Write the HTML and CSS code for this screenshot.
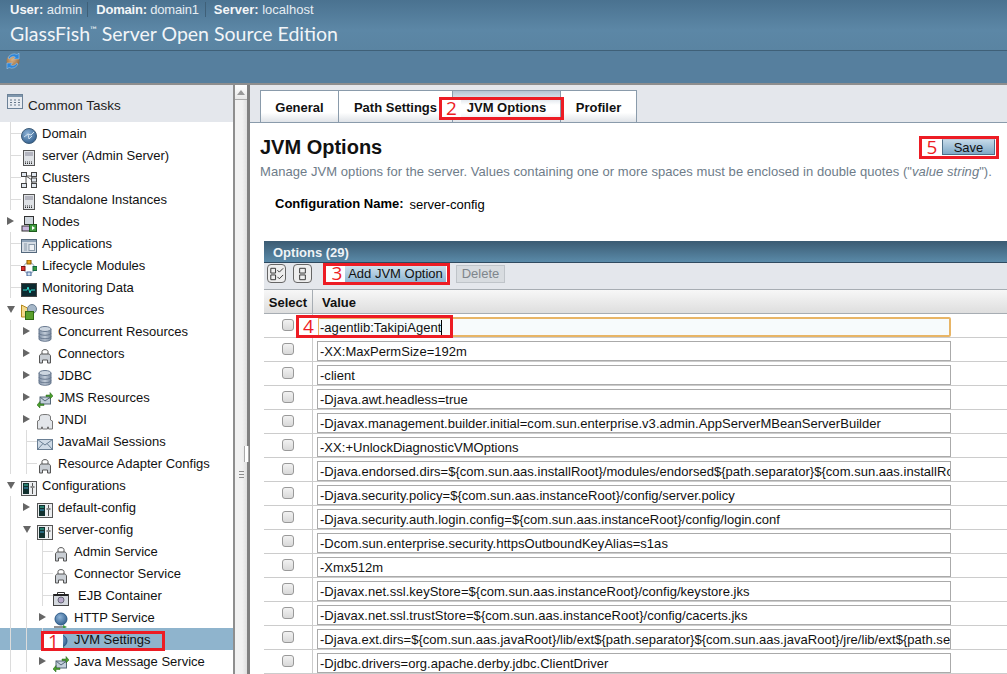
FILE: index.html
```html
<!DOCTYPE html>
<html lang="en">
<head>
<meta charset="utf-8">
<title>GlassFish Server Open Source Edition</title>
<link rel="stylesheet" href="styles.css">
</head>
<body>
<svg class="defs" width="0" height="0" aria-hidden="true">
  <defs>
    <linearGradient id="gdb" x1="0" x2="1" y1="0" y2="0"><stop offset="0" stop-color="#7f8fa5"/><stop offset=".5" stop-color="#c3cdd9"/><stop offset="1" stop-color="#76869c"/></linearGradient>
    <radialGradient id="gglobe" cx=".4" cy=".35" r=".7"><stop offset="0" stop-color="#8fb4d8"/><stop offset="1" stop-color="#2f5d8c"/></radialGradient>
    <radialGradient id="gball" cx=".45" cy=".4" r=".6"><stop offset="0" stop-color="#d9b183"/><stop offset="1" stop-color="#94693c"/></radialGradient>
    <symbol id="i-globe" viewBox="0 0 16 16"><circle cx="8" cy="8" r="7.500" fill="url(#gglobe)" stroke="#3d5c78"/><path d="M3 9l4-3 3 1 3-3M7 6l1 5 3-3" fill="none" stroke="#cfe0ee" stroke-width="1"/></symbol>
    <symbol id="i-server" viewBox="0 0 16 16"><rect x="2.500" y=".5" width="11" height="15" fill="#dfe2e6" stroke="#555"/><path d="M4 3h8M4 5h8" stroke="#889"/><path d="M4 12h8M4 13.500h8" stroke="#333" stroke-dasharray="1 1"/></symbol>
    <symbol id="i-cluster" viewBox="0 0 16 16"><path d="M5 4h6M5 4l6 4M5 4v8M11 12V4" stroke="#555" fill="none"/><g fill="#dfe6ee" stroke="#444"><rect x=".5" y=".5" width="5" height="4"/><rect x="10.500" y=".5" width="5" height="4"/><rect x="10.500" y="6" width="5" height="4"/><rect x=".5" y="11.500" width="5" height="4"/><rect x="10.500" y="11.500" width="5" height="4"/></g></symbol>
    <symbol id="i-nodes" viewBox="0 0 16 16"><rect x="3.500" y=".5" width="9" height="8" fill="#cfd6dd" stroke="#333"/><rect x="1" y="10" width="9" height="5" fill="#c9b6dd" stroke="#333"/><rect x="8.500" y="8.500" width="7" height="7" fill="#3f9a3f" stroke="#1d5c1d"/><path d="M11 10l3 2-3 2z" fill="#fff"/></symbol>
    <symbol id="i-apps" viewBox="0 0 16 16"><rect x=".5" y="1.500" width="15" height="13" fill="#d5dce4" stroke="#55697d"/><rect x="1" y="2" width="14" height="2" fill="#8fa3b8"/><path d="M3 6h3M3 8h3M3 10h3M3 12h3" stroke="#8a9aaa"/><rect x="8" y="6.500" width="5.500" height="6" fill="#eef1f4" stroke="#8a9aaa"/></symbol>
    <symbol id="i-life" viewBox="0 0 16 16"><circle cx="8" cy="8" r="5.500" fill="none" stroke="#8ba0b8"/><rect x="6" y="0" width="4" height="4" fill="#e9a21c" stroke="#8a5c00"/><rect x="0" y="6.500" width="4" height="4" fill="#d33" stroke="#711"/><rect x="12" y="6.500" width="4" height="4" fill="#3a9a3a" stroke="#164"/><rect x="6" y="12" width="4" height="4" fill="#cfe0f0" stroke="#469"/></symbol>
    <symbol id="i-monitor" viewBox="0 0 16 16"><rect x=".5" y="1.500" width="15" height="13" fill="#0d2a30" stroke="#444"/><path d="M2 8h4l1-3 2 6 1-3h4" fill="none" stroke="#2fd6c8"/></symbol>
    <symbol id="i-res" viewBox="0 0 16 16"><path d="M.5 1l6 3v9H.5z" fill="#f3d98a" stroke="#b58a1e"/><circle cx="11" cy="5" r="4.500" fill="#a6b7c8" stroke="#6b7f93"/><rect x="4.500" y="7.500" width="8" height="8" fill="#5aa02c" stroke="#2f6b12"/></symbol>
    <symbol id="i-db" viewBox="0 0 16 16"><path d="M2 3v10c0 3 12 3 12 0V3z" fill="url(#gdb)" stroke="#6a7a90"/><ellipse cx="8" cy="3" rx="6" ry="2.500" fill="#cdd6e0" stroke="#6a7a90"/><path d="M2 7c0 3 12 3 12 0M2 10.500c0 3 12 3 12 0" fill="none" stroke="#6a7a90"/></symbol>
    <symbol id="i-conn" viewBox="0 0 16 16"><path d="M5 6V3.500C5 1 11 1 11 3.500V6" fill="none" stroke="#555"/><path d="M2.500 15V8c0-1 1-2 2-2h7c1 0 2 1 2 2v7h-3v-3h-5v3z" fill="#c9ced4" stroke="#555"/></symbol>
    <symbol id="i-jms" viewBox="0 0 16 16"><rect x="3" y="5" width="10.500" height="7" fill="#c3cfdb" stroke="#567"/><path d="M3 5l5 4 5.500-4" fill="none" stroke="#567"/><path d="M9 3h4V.5l3 3.500-3 3V4.500H9z" fill="#4aa02c" stroke="#27601a" stroke-width=".5"/><path d="M7 12H3V9.500L0 13l3 3v-2.500h4z" fill="#4aa02c" stroke="#27601a" stroke-width=".5"/></symbol>
    <symbol id="i-jndi" viewBox="0 0 16 16"><path d="M.5 15V7l2-1V3c0-2 2-2.500 5.500-2.500S13.500 1 13.500 3v3l2 1v8h-4v-2h-1v2h-5v-2h-1v2z" fill="#e3e6ea" stroke="#777"/></symbol>
    <symbol id="i-mail" viewBox="0 0 16 16"><rect x=".5" y="3.500" width="15" height="10" fill="#cfdbe7" stroke="#6a7f94"/><path d="M.5 3.500L8 9l7.500-5.500M.5 13.500L6 7.500M15.500 13.500L10 7.500" fill="none" stroke="#6a7f94"/></symbol>
    <symbol id="i-config" viewBox="0 0 16 16"><rect x=".5" y="1.500" width="15" height="14" fill="#eceef0" stroke="#555"/><rect x="2" y="3" width="6" height="11" fill="#12312f"/><path d="M3 5h4" stroke="#3fd0b0"/><path d="M3 8h4" stroke="#3fa0d0"/><path d="M11.500 3v11" stroke="#555"/><rect x="9.500" y="6" width="4" height="2" fill="#888"/></symbol>
    <symbol id="i-ejb" viewBox="0 0 16 16"><path d="M4.500 4V2.500h7V4" fill="none" stroke="#333"/><rect x=".5" y="4.500" width="15" height="11" fill="#d4d8de" stroke="#444"/><path d="M1 5h14" stroke="#222" stroke-width="2"/><circle cx="8" cy="10" r="3" fill="#b7a8c9" stroke="#667"/></symbol>
    <symbol id="i-http" viewBox="0 0 16 16"><circle cx="8" cy="7" r="6" fill="url(#gglobe)" stroke="#2b5a88"/><path d="M1 15h9" stroke="#222"/><path d="M10 13l4 2-4 2z" fill="#3f9a3f"/></symbol>
  </defs>
</svg>

<header class="masthead">
  <div class="userbar">
    <span class="ub-item ub-user"><b>User:</b> admin</span>
    <span class="ub-item ub-sep ub-domain"><b>Domain:</b> domain1</span>
    <span class="ub-item ub-sep"><b>Server:</b> localhost</span>
  </div>
  <div class="product">GlassFish<sup class="tm">™</sup> Server Open Source Edition</div>
</header>
<div class="statusbar">
  <svg class="refresh" viewBox="0 0 16 16" width="16" height="16"><circle cx="8" cy="8" r="6.500" fill="url(#gball)"/><path d="M3 5a6.500 6.500 0 0 1 9-3.500l2-1.500v6h-5.500l1.800-1.800A4 4 0 0 0 4.500 6z" fill="#2f86d8" stroke="#cfe6f8" stroke-width=".4"/><path d="M13 11a6.500 6.500 0 0 1-9 3.500L2 16v-6h5.500l-1.800 1.800A4 4 0 0 0 11.500 10z" fill="#2f86d8" stroke="#cfe6f8" stroke-width=".4"/></svg>
</div>

<main class="workspace">
  <nav class="tree">
    <div class="tasks">
      <svg class="tasks-icon" viewBox="0 0 16 16" width="16" height="16"><rect x=".5" y=".5" width="15" height="14" fill="#e8ecf1" stroke="#6c8298"/><rect x="1" y="1" width="14" height="2" fill="#7f97ad"/><path d="M3 6h2M7 6h2M11 6h2M3 8.500h2M7 8.500h2M11 8.500h2M3 11h2M7 11h2M11 11h2" stroke="#66788a"/></svg>
      <span class="tasks-lbl">Common Tasks</span>
    </div>
    <div class="row"><span class="branch"></span><svg class="ico"><use href="#i-globe"/></svg><span class="lbl">Domain</span></div>
    <div class="row"><span class="branch"></span><svg class="ico"><use href="#i-server"/></svg><span class="lbl">server (Admin Server)</span></div>
    <div class="row"><span class="branch"></span><svg class="ico"><use href="#i-cluster"/></svg><span class="lbl">Clusters</span></div>
    <div class="row"><span class="branch"></span><svg class="ico"><use href="#i-server"/></svg><span class="lbl">Standalone Instances</span></div>
    <div class="row"><span class="tog closed"></span><svg class="ico"><use href="#i-nodes"/></svg><span class="lbl">Nodes</span></div>
    <div class="row"><span class="branch"></span><svg class="ico"><use href="#i-apps"/></svg><span class="lbl">Applications</span></div>
    <div class="row"><span class="branch"></span><svg class="ico"><use href="#i-life"/></svg><span class="lbl">Lifecycle Modules</span></div>
    <div class="row"><span class="branch"></span><svg class="ico"><use href="#i-monitor"/></svg><span class="lbl">Monitoring Data</span></div>
    <div class="row"><span class="tog open"></span><svg class="ico"><use href="#i-res"/></svg><span class="lbl">Resources</span></div>
    <div class="row"><span class="ind"></span><span class="tog closed"></span><svg class="ico"><use href="#i-db"/></svg><span class="lbl">Concurrent Resources</span></div>
    <div class="row"><span class="ind"></span><span class="tog closed"></span><svg class="ico"><use href="#i-conn"/></svg><span class="lbl">Connectors</span></div>
    <div class="row"><span class="ind"></span><span class="tog closed"></span><svg class="ico"><use href="#i-db"/></svg><span class="lbl">JDBC</span></div>
    <div class="row"><span class="ind"></span><span class="tog closed"></span><svg class="ico"><use href="#i-jms"/></svg><span class="lbl">JMS Resources</span></div>
    <div class="row"><span class="ind"></span><span class="tog closed"></span><svg class="ico"><use href="#i-jndi"/></svg><span class="lbl">JNDI</span></div>
    <div class="row"><span class="ind"></span><span class="branch"></span><svg class="ico"><use href="#i-mail"/></svg><span class="lbl">JavaMail Sessions</span></div>
    <div class="row"><span class="ind"></span><span class="branch"></span><svg class="ico"><use href="#i-conn"/></svg><span class="lbl">Resource Adapter Configs</span></div>
    <div class="row"><span class="tog open"></span><svg class="ico"><use href="#i-config"/></svg><span class="lbl">Configurations</span></div>
    <div class="row"><span class="ind"></span><span class="tog closed"></span><svg class="ico"><use href="#i-config"/></svg><span class="lbl">default-config</span></div>
    <div class="row"><span class="ind"></span><span class="tog open"></span><svg class="ico"><use href="#i-config"/></svg><span class="lbl">server-config</span></div>
    <div class="row"><span class="ind"></span><span class="ind"></span><span class="branch"></span><svg class="ico"><use href="#i-conn"/></svg><span class="lbl">Admin Service</span></div>
    <div class="row"><span class="ind"></span><span class="ind"></span><span class="branch"></span><svg class="ico"><use href="#i-conn"/></svg><span class="lbl">Connector Service</span></div>
    <div class="row"><span class="ind"></span><span class="ind"></span><span class="branch"></span><svg class="ico"><use href="#i-ejb"/></svg><span class="lbl lbl-ejb">EJB Container</span></div>
    <div class="row"><span class="ind"></span><span class="ind"></span><span class="tog closed"></span><svg class="ico"><use href="#i-http"/></svg><span class="lbl">HTTP Service</span></div>
    <div class="row selected"><span class="ind"></span><span class="ind"></span><span class="branch"></span><svg class="ico"><use href="#i-http"/></svg><span class="lbl">JVM Settings</span><span class="mark mark-1"><i class="num">1</i></span></div>
    <div class="row"><span class="ind"></span><span class="ind"></span><span class="tog closed"></span><svg class="ico"><use href="#i-jms"/></svg><span class="lbl">Java Message Service</span></div>
  </nav>

  <div class="scroll">
    <div class="scroll-btn"><span class="scroll-arrow"></span></div>
    <div class="scroll-thumb"><i class="grip-line"></i><i class="grip-line"></i><i class="grip-line"></i></div>
  </div>
  <div class="splitter"><span class="split-grip"></span></div>

  <section class="content">
    <div class="tabs">
      <span class="tab tab-general">General</span>
      <span class="tab tab-path">Path Settings</span>
      <span class="tab tab-jvm active">JVM Options</span>
      <span class="tab tab-prof">Profiler</span>
      <span class="mark mark-2"><i class="num">2</i></span>
    </div>
    <div class="title-row">
      <h1>JVM Options</h1>
      <div class="save-wrap"><span class="mark-fill mark-5"><i class="num">5</i><button class="btn-save">Save</button></span></div>
    </div>
    <p class="help">Manage JVM options for the server. Values containing one or more spaces must be enclosed in double quotes ("<em>value string</em>").</p>
    <div class="cfg"><b>Configuration Name:</b><span>server-config</span></div>

    <div class="panel">
      <div class="panel-title">Options (29)</div>
      <div class="panel-tools">
        <span class="mini"><svg viewBox="0 0 20 20" width="20" height="20"><path d="M4 4h5v5H4zM4 11h5v5H4z" fill="none" stroke="#333"/><path d="M11 6l2 2 4-4M11 13l2 2 4-4" fill="none" stroke="#333"/></svg></span>
        <span class="mini mini-2"><svg viewBox="0 0 20 20" width="20" height="20"><path d="M7 4h6v5H7zM7 11h6v5H7z" fill="none" stroke="#333"/></svg></span>
        <span class="mark-fill mark-3"><i class="num">3</i><button class="btn-add">Add JVM Option</button></span>
        <button class="btn-del">Delete</button>
      </div>
      <div class="thead"><span class="c-sel">Select</span><span class="c-val">Value</span></div>
      <div class="trow"><span class="c-sel"><i class="chk"></i></span><span class="c-val"><span class="field focus">-agentlib:TakipiAgent<i class="caret"></i></span></span><span class="mark mark-4"><i class="num">4</i></span></div>
      <div class="trow"><span class="c-sel"><i class="chk"></i></span><span class="c-val"><span class="field">-XX:MaxPermSize=192m</span></span></div>
      <div class="trow"><span class="c-sel"><i class="chk"></i></span><span class="c-val"><span class="field">-client</span></span></div>
      <div class="trow"><span class="c-sel"><i class="chk"></i></span><span class="c-val"><span class="field">-Djava.awt.headless=true</span></span></div>
      <div class="trow"><span class="c-sel"><i class="chk"></i></span><span class="c-val"><span class="field">-Djavax.management.builder.initial=com.sun.enterprise.v3.admin.AppServerMBeanServerBuilder</span></span></div>
      <div class="trow"><span class="c-sel"><i class="chk"></i></span><span class="c-val"><span class="field">-XX:+UnlockDiagnosticVMOptions</span></span></div>
      <div class="trow"><span class="c-sel"><i class="chk"></i></span><span class="c-val"><span class="field">-Djava.endorsed.dirs=${com.sun.aas.installRoot}/modules/endorsed${path.separator}${com.sun.aas.installRoot}/lib/endorsed</span></span></div>
      <div class="trow"><span class="c-sel"><i class="chk"></i></span><span class="c-val"><span class="field">-Djava.security.policy=${com.sun.aas.instanceRoot}/config/server.policy</span></span></div>
      <div class="trow"><span class="c-sel"><i class="chk"></i></span><span class="c-val"><span class="field">-Djava.security.auth.login.config=${com.sun.aas.instanceRoot}/config/login.conf</span></span></div>
      <div class="trow"><span class="c-sel"><i class="chk"></i></span><span class="c-val"><span class="field">-Dcom.sun.enterprise.security.httpsOutboundKeyAlias=s1as</span></span></div>
      <div class="trow"><span class="c-sel"><i class="chk"></i></span><span class="c-val"><span class="field">-Xmx512m</span></span></div>
      <div class="trow"><span class="c-sel"><i class="chk"></i></span><span class="c-val"><span class="field">-Djavax.net.ssl.keyStore=${com.sun.aas.instanceRoot}/config/keystore.jks</span></span></div>
      <div class="trow"><span class="c-sel"><i class="chk"></i></span><span class="c-val"><span class="field">-Djavax.net.ssl.trustStore=${com.sun.aas.instanceRoot}/config/cacerts.jks</span></span></div>
      <div class="trow"><span class="c-sel"><i class="chk"></i></span><span class="c-val"><span class="field">-Djava.ext.dirs=${com.sun.aas.javaRoot}/lib/ext${path.separator}${com.sun.aas.javaRoot}/jre/lib/ext${path.separator}${com.sun.aas.instanceRoot}/lib/ext</span></span></div>
      <div class="trow"><span class="c-sel"><i class="chk"></i></span><span class="c-val"><span class="field">-Djdbc.drivers=org.apache.derby.jdbc.ClientDriver</span></span></div>
    </div>
  </section>
</main>
</body>
</html>
```

FILE: styles.css
```css
* { box-sizing: border-box; }
html, body { margin: 0; height: 674px; overflow: hidden; }
body { font: 13px "Liberation Sans", Arial, sans-serif; color: #000; background: #fff; display: flex; flex-direction: column; }
.defs { position: absolute; }

.masthead { height: 51px; flex: none; color: #fff; background: linear-gradient(#4a7290, #5c87a6 60%, #5a84a2); border-bottom: 1px solid #3f6078; padding: 1px 0 0 10px; }
.userbar { display: flex; height: 17px; align-items: center; color: #e6edf3; }
.userbar b { color: #f4f6f8; }
.ub-item { padding-right: 6px; }
.ub-user { padding-right: 5px; }
.ub-sep { border-left: 1px solid #3f6078; padding-left: 8px; }
.ub-domain { letter-spacing: -.2px; }
.product { font: 19.500px/30px Lato, "Open Sans", sans-serif; color: #f2f5f8; margin-top: 1px; }
.tm { font-size: 9px; line-height: 0; vertical-align: 8px; }

.statusbar { height: 34px; flex: none; background: #567f9e; border-bottom: 2px solid #8e8e8e; padding: 2px 0 0 5px; }
.refresh { display: block; }

.workspace { flex: 1; display: flex; min-height: 0; }

.tree { width: 233px; flex: none; overflow: hidden; background: #fff; }
.tasks { height: 37px; background: #e4e7ec; display: flex; align-items: center; padding: 0 0 0 7px; gap: 5px; font-size: 13.500px; color: #222; }
.tasks-icon { margin-top: -4px; }
.tasks-lbl { margin-top: 3px; }
.row { position: relative; height: 22px; display: flex; align-items: center; padding-left: 10px; white-space: nowrap; color: #111; }
.ind { width: 16px; height: 22px; flex: none; border-left: 1px solid #dcdcdc; }
.branch { width: 11px; height: 22px; flex: none; position: relative; border-left: 1px solid #dcdcdc; }
.branch::after { content: ""; position: absolute; left: 0; top: 11px; width: 10px; border-top: 1px solid #dcdcdc; }
.tog { width: 11px; height: 22px; flex: none; position: relative; }
.tog::after { content: ""; position: absolute; }
.tog.closed::after { left: -3px; top: 7px; border: 4px solid transparent; border-left: 7px solid #666; border-right: 0; }
.tog.open::after { left: -3px; top: 8px; border: 4px solid transparent; border-top: 7px solid #666; border-bottom: 0; }
.ico { width: 16px; height: 16px; flex: none; margin-top: 5px; }
.lbl { margin-left: 5px; }
.lbl-ejb { margin-left: 9px; }
.selected { background: #8fb4cd; }

.scroll { width: 14px; flex: none; background: #e9e9e9; border-left: 2px solid #8e8e8e; display: flex; flex-direction: column; }
.scroll-btn { height: 15px; flex: none; background: linear-gradient(#fff, #e8e8e8); border-bottom: 1px solid #aaa; display: flex; align-items: center; justify-content: center; }
.scroll-arrow { border: 4px solid transparent; border-bottom: 5px solid #999; border-top: 0; }
.scroll-thumb { flex: 1; display: flex; flex-direction: column; align-items: center; gap: 2px; padding-top: 371px; background: linear-gradient(90deg, #f1f1f1 60%, #dfdfdf); }
.grip-line { display: block; width: 5px; height: 1px; background: #8c8c8c; }
.splitter { width: 3px; flex: none; background: #808080; position: relative; }
.split-grip { position: absolute; left: -3px; top: 361px; width: 5px; height: 16px; background: #fff; border-left: 1px solid #aaa; border-right: 1px solid #aaa; }

.content { flex: 1; min-width: 0; overflow: hidden; position: relative; }
.tabs { height: 38px; background: #e4e7ec; border-bottom: 1px solid #8a9bab; padding: 5px 0 0 10px; display: flex; position: relative; }
.tab { height: 32px; padding-top: 2px; display: flex; align-items: center; justify-content: center; font-weight: bold; color: #111; background: linear-gradient(#fff 70%, #dfe3e8); border: 1px solid #8a9bab; border-bottom: 0; border-left: 0; }
.tab-general { width: 79px; border-left: 1px solid #8a9bab; }
.tab-path { width: 114px; }
.tab-jvm { width: 108px; }
.tab-prof { width: 76px; }
.tab.active { background: linear-gradient(#b5c4d3, #fff 45%, #fff 70%, #dfe3e8); }

.title-row { height: 39px; display: flex; justify-content: space-between; align-items: center; padding: 9px 8px 0 10px; }
h1 { margin: 0; font-size: 20px; font-weight: bold; color: #111; }
.help { margin: 2px 0 0 10px; color: #6e7c89; white-space: nowrap; height: 15px; line-height: 15px; letter-spacing: .055px; }
.cfg { margin: 17px 0 0 25px; height: 15px; line-height: 15px; display: flex; gap: 6px; }
.cfg span { margin-top: 1px; }

.panel { margin: 30px 0 0 14px; width: 760px; }
.panel-title { height: 22px; line-height: 24px; padding-left: 9px; font-weight: bold; color: #eef3f7; background: linear-gradient(#3b5b73, #5a8aa8); border-bottom: 1px solid #2e4a60; }
.panel-tools { height: 27px; background: #e4e7ec; border-bottom: 1px solid #a7adb3; display: flex; align-items: center; padding: 0 0 5px 3px; }
.mini { width: 19px; height: 19px; border: 1px solid #666; border-radius: 4px; background: #eee; display: flex; margin-right: 7px; }
.mini svg { margin: -1px; }
.thead { height: 24px; display: flex; align-items: center; font-weight: bold; color: #111; background: linear-gradient(#f7f7f7, #dedede); border-bottom: 1px solid #a7adb3; }
.c-sel { width: 49px; flex: none; text-align: center; height: 100%; display: flex; align-items: center; justify-content: center; border-right: 1px solid #a7adb3; }
.c-val { flex: 1; padding-left: 9px; }
.thead .c-sel { padding-top: 1px; }
.thead .c-val { padding-top: 1px; }
.trow { position: relative; height: 24px; display: flex; align-items: flex-start; border-bottom: 1px solid #ccc; }
.trow .c-sel { border-right-color: #ccc; }
.trow .c-val { padding: 3px 0 0 4px; }
.chk { width: 12px; height: 12px; margin: -2px 0 0 0; border: 1px solid #999; border-radius: 3px; background: linear-gradient(#f2f2f2, #d9d9d9); display: block; }
.field { display: block; width: 634px; height: 20px; line-height: 19px; padding-left: 2px; border: 1px solid #aaa; overflow: hidden; white-space: nowrap; color: #111; background: #fff; letter-spacing: .03px; }
.field.focus { border: 2px solid #e8b566; border-radius: 2px; background: #f7fbfc; line-height: 17px; padding-left: 1px; }
.caret { display: inline-block; width: 1px; height: 15px; background: #000; vertical-align: -3px; }

button { font: 13px "Liberation Sans", Arial, sans-serif; padding: 0; cursor: default; }
.btn-save { width: 53px; height: 16px; border: 1px solid #4e6f88; border-top-color: #bcd; background: linear-gradient(#c4d9e8, #7fa9c6); color: #111; }
.btn-add { width: 101px; height: 16px; border: 0; background: linear-gradient(#cfe0ec, #8db5d2); color: #111; }
.btn-del { margin-left: 6px; width: 49px; height: 18px; border: 1px solid #bfc4c9; background: #d8dce0; color: #7f868c; }

.mark-fill { display: flex; align-items: center; background: #fff; border: 3px solid #ed1c24; }
.mark-3 { width: 127px; height: 22px; margin-left: 4px; padding-left: 3px; }
.mark-5 { width: 80px; height: 23px; }
.mark-5 .num { width: 20px; }
.mark-3 .num { width: 16px; }
.mark { position: absolute; border: 3px solid #ed1c24; pointer-events: none; }
.num { font: 19px/1 "Open Sans", sans-serif; font-style: normal; color: #ed1c24; text-align: center; display: block; }
.mark-1 { left: 41px; top: 3px; width: 124px; height: 20px; }
.mark-1 .num { background: #fff; width: 19px; height: 14px; line-height: 14px; }
.mark-2 { left: 189px; top: 12px; width: 125px; height: 23px; }
.mark-2 .num { background: #fff; width: 19px; height: 17px; line-height: 17px; }
.mark-4 { left: 32px; top: 1px; width: 157px; height: 23px; }
.mark-4 .num { background: #fff; width: 19px; height: 17px; line-height: 17px; }
```
